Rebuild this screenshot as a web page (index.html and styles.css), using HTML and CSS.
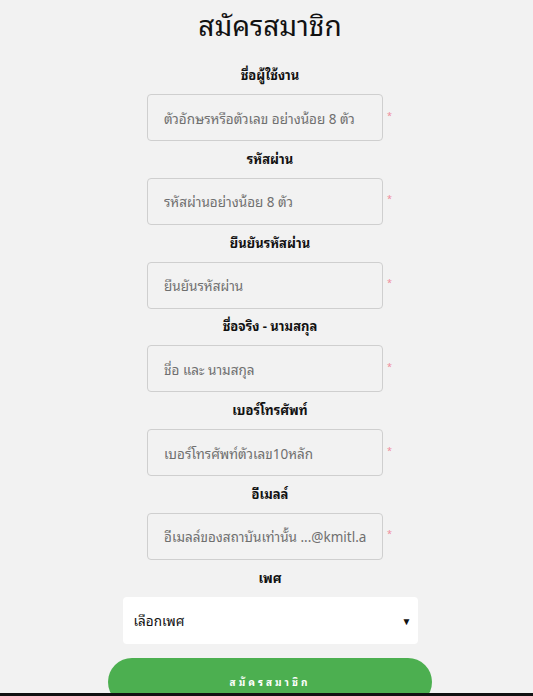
FILE: index.html
```html
<!DOCTYPE html>
<html lang="th">
<head>
<meta charset="utf-8">
<title>สมัครสมาชิก</title>
<link rel="stylesheet" href="styles.css">
</head>
<body>
<div class="page">
  <h1 class="title">สมัครสมาชิก</h1>
  <form class="form">
    <div class="field">
      <label class="label">ชื่อผู้ใช้งาน</label>
      <div class="row"><input class="input" type="text" placeholder="ตัวอักษรหรือตัวเลข อย่างน้อย 8 ตัว"><span class="req">*</span></div>
    </div>
    <div class="field">
      <label class="label">รหัสผ่าน</label>
      <div class="row"><input class="input" type="password" placeholder="รหัสผ่านอย่างน้อย 8 ตัว"><span class="req">*</span></div>
    </div>
    <div class="field">
      <label class="label">ยืนยันรหัสผ่าน</label>
      <div class="row"><input class="input" type="password" placeholder="ยืนยันรหัสผ่าน"><span class="req">*</span></div>
    </div>
    <div class="field">
      <label class="label">ชื่อจริง - นามสกุล</label>
      <div class="row"><input class="input" type="text" placeholder="ชื่อ และ นามสกุล"><span class="req">*</span></div>
    </div>
    <div class="field">
      <label class="label">เบอร์โทรศัพท์</label>
      <div class="row"><input class="input" type="text" placeholder="เบอร์โทรศัพท์ตัวเลข10หลัก"><span class="req">*</span></div>
    </div>
    <div class="field">
      <label class="label">อีเมลล์</label>
      <div class="row"><input class="input" type="text" placeholder="อีเมลล์ของสถาบันเท่านั้น ...@kmitl.ac.th"><span class="req">*</span></div>
    </div>
    <div class="field field-last">
      <label class="label">เพศ</label>
      <div class="select"><span>เลือกเพศ</span><span class="arrow">▼</span></div>
    </div>
    <button class="submit" type="button">สมัครสมาชิก</button>
  </form>
</div>
<div class="bottom-bar"></div>
</body>
</html>
```
FILE: styles.css
```css
html, body {
  margin: 0;
  padding: 0;
  background: #f2f2f2;
  height: 696px;
  overflow: hidden;
}
body {
  font-family: "Noto Sans Thai Looped", "Noto Looped Thai", "Loma", "Garuda", "Tlwg Typo", "Noto Sans", "Noto Sans Thai", Tahoma, sans-serif;
  color: #111;
}
.page {
  padding-left: 7px;
  display: flex;
  flex-direction: column;
  align-items: center;
}
.title {
  margin: 4px 0 0;
  font-size: 28px;
  font-weight: 400;
  line-height: 40px;
  height: 40px;
}
.form {
  display: flex;
  flex-direction: column;
  align-items: center;
  margin-top: 22px;
}
.field {
  display: flex;
  flex-direction: column;
  align-items: center;
  height: 83.8px;
}
.field-last {
  height: 75px;
}
.label {
  font-size: 13px;
  font-weight: 700;
  line-height: 18px;
  height: 18px;
  margin-bottom: 10px;
}
.row {
  display: flex;
  align-items: center;
  gap: 4px;
}
.input {
  box-sizing: border-box;
  width: 236px;
  height: 47px;
  border: 1px solid #cfcfcf;
  border-radius: 4px;
  background: #f2f2f2;
  padding: 0 16px;
  font-family: inherit;
  font-size: 13.5px;
  color: #333;
  outline: none;
}
.input::placeholder {
  color: #6f6f6f;
}
.req {
  color: #ef8a9b;
  font-size: 9px;
  width: 6px;
  margin-top: -6px;
}
.select {
  box-sizing: border-box;
  width: 295px;
  height: 47px;
  background: #fff;
  border-radius: 4px;
  display: flex;
  align-items: center;
  justify-content: space-between;
  padding: 0 6px 0 11px;
  font-size: 13.5px;
  color: #111;
}
.arrow {
  font-size: 10px;
  color: #111;
}
.submit {
  margin-top: 14px;
  width: 324px;
  height: 48px;
  flex-shrink: 0;
  border: none;
  border-radius: 24px;
  background: #4caf50;
  color: #fff;
  font-family: inherit;
  font-size: 10px;
  font-weight: 700;
  letter-spacing: 3px;
  padding-bottom: 2px;
}
.bottom-bar {
  position: fixed;
  left: 0;
  right: 0;
  bottom: 0;
  height: 3px;
  background: #111;
}
```
